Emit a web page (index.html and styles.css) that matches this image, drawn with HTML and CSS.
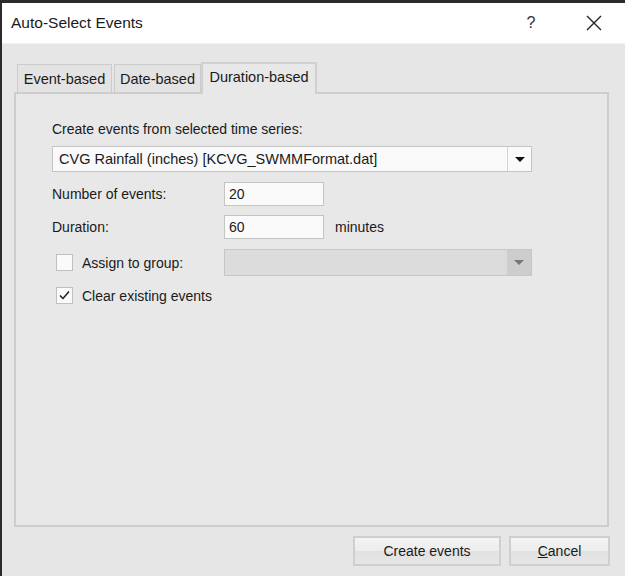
FILE: index.html
```html
<!DOCTYPE html>
<html lang="en">
<head>
    <meta charset="UTF-8">
    <title>Auto-Select Events</title>
    <link rel="stylesheet" href="styles.css">
</head>
<body>
<div class="window">
    <div class="titlebar">
        <span class="title">Auto-Select Events</span>
        <span class="help">?</span>
        <span class="close">
            <svg width="16" height="16" viewBox="0 0 16 16"><path d="M1 1L15 15M15 1L1 15" stroke="#222" stroke-width="1.4" fill="none"/></svg>
        </span>
    </div>
    <div class="dialog">
        <div class="tabs">
            <div class="tab event">Event-based</div>
            <div class="tab date">Date-based</div>
            <div class="tab active">Duration-based</div>
        </div>
        <div class="panel">
            <div class="caption">Create events from selected time series:</div>
            <div class="combo">
                <span class="combo-text">CVG Rainfall (inches) [KCVG_SWMMFormat.dat]</span>
                <span class="combo-btn"><span class="arrow"></span></span>
            </div>
            <div class="field">
                <span class="label">Number of events:</span>
                <span class="textbox">20</span>
            </div>
            <div class="field">
                <span class="label">Duration:</span>
                <span class="textbox">60</span>
                <span class="unit">minutes</span>
            </div>
            <div class="field group-row">
                <span class="check-label">
                    <span class="checkbox"></span>
                    <span>Assign to group:</span>
                </span>
                <div class="combo disabled">
                    <span class="combo-text"></span>
                    <span class="combo-btn"><span class="arrow"></span></span>
                </div>
            </div>
            <div class="check-label clear-row">
                <span class="checkbox">
                    <svg width="13" height="13" viewBox="0 0 13 13"><path d="M2 6.5L5 9.5L11 2.5" stroke="#1a1a1a" stroke-width="1.5" fill="none"/></svg>
                </span>
                <span>Clear existing events</span>
            </div>
        </div>
        <div class="buttons">
            <button class="btn create">Create events</button>
            <button class="btn cancel"><u>C</u>ancel</button>
        </div>
    </div>
</div>
</body>
</html>
```

FILE: styles.css
```css
body {
    margin: 0;
    padding: 0;
    background-color: #2b2b2b;
    font-family: "Liberation Sans", Arial, sans-serif;
    font-size: 14px;
    color: #1a1a1a;
}
.window {
    margin-top: 3px;
    margin-left: 2px;
    height: 573px;
    background-color: #e6e6e6;
    display: flex;
    flex-direction: column;
}
.titlebar {
    height: 40px;
    background: white;
    border-bottom: 1px solid #f2f2f2;
    display: flex;
    align-items: center;
    padding-left: 9px;
}
.title {
    font-size: 15.5px;
    flex: 1;
}
.help {
    font-size: 16px;
    color: #333;
    width: 60px;
    text-align: center;
    margin-right: 12px;
}
.close {
    width: 42px;
    height: 40px;
    display: flex;
    align-items: center;
    justify-content: center;
    margin-right: 10px;
}
.dialog {
    flex: 1;
    padding: 18px 16px 0 12px;
    display: flex;
    flex-direction: column;
}
.tabs {
    display: flex;
    align-items: flex-end;
    padding-left: 3px;
    height: 30px;
}
.tab {
    box-sizing: border-box;
    height: 28px;
    line-height: 28px;
    text-align: center;
    border: 1px solid #cccccc;
    border-bottom: none;
    margin-right: 2px;
    background-color: #e3e3e3;
    font-size: 14.5px;
}
.tab.event {
    width: 95px;
}
.tab.date {
    width: 87px;
    margin-right: 0;
}
.tab.active {
    width: 116px;
    height: 32px;
    line-height: 27px;
    border: 2px solid #d0d0d0;
    border-bottom: none;
    background-color: #e8e8e8;
    margin-bottom: -2px;
    position: relative;
    z-index: 1;
}
.panel {
    box-sizing: border-box;
    height: 435px;
    border: 2px solid #cdcdcd;
    background-color: #e8e8e8;
    padding: 25px 0 0 36px;
    display: flex;
    flex-direction: column;
}
.caption {
    height: 20px;
    line-height: 20px;
}
.combo {
    margin-top: 7px;
    width: 478px;
    height: 24px;
    border: 1px solid #c4c4c4;
    background-color: #fafafa;
    display: flex;
}
.combo-text {
    flex: 1;
    line-height: 24px;
    padding-left: 6px;
    font-size: 14.5px;
}
.combo-btn {
    width: 23px;
    border-left: 1px solid #d4d4d4;
    display: flex;
    align-items: center;
    justify-content: center;
}
.arrow {
    width: 0;
    height: 0;
    border-left: 5px solid transparent;
    border-right: 5px solid transparent;
    border-top: 5px solid #111;
}
.field {
    display: flex;
    align-items: center;
    margin-top: 10px;
}
.label {
    width: 172px;
}
.textbox {
    width: 94px;
    height: 22px;
    line-height: 22px;
    padding-left: 4px;
    border: 1px solid #c4c4c4;
    background-color: #fafafa;
}
.field + .field {
    margin-top: 9px;
}
.unit {
    margin-left: 11px;
}
.field.group-row {
    margin-top: 10px;
}
.group-row .check-label {
    width: 172px;
}
.combo.disabled {
    margin-top: 0;
    width: 306px;
    height: 25px;
    background-color: #dcdcdc;
    border: 1px solid #c6c6c6;
}
.combo.disabled .combo-btn {
    background-color: #cdcdcd;
    border-left: none;
    width: 24px;
}
.combo.disabled .arrow {
    border-top-color: #777;
}
.check-label {
    display: flex;
    align-items: center;
}
.checkbox {
    width: 15px;
    height: 15px;
    border: 1px solid #c0c0c0;
    background-color: #fafafa;
    margin-left: 4px;
    margin-right: 9px;
    display: flex;
    align-items: center;
    justify-content: center;
}
.clear-row {
    margin-top: 11px;
}
.buttons {
    display: flex;
    justify-content: flex-end;
    margin-top: 9px;
    margin-right: -1px;
    gap: 8px;
}
.btn {
    font-family: "Liberation Sans", Arial, sans-serif;
    font-size: 14px;
    color: #1a1a1a;
    height: 30px;
    border: 2px solid #cfcfcf;
    background: linear-gradient(#f4f4f4, #ececec 50%, #e2e2e2 51%, #e6e6e6);
}
.create {
    width: 148px;
}
.cancel {
    width: 101px;
}
```
